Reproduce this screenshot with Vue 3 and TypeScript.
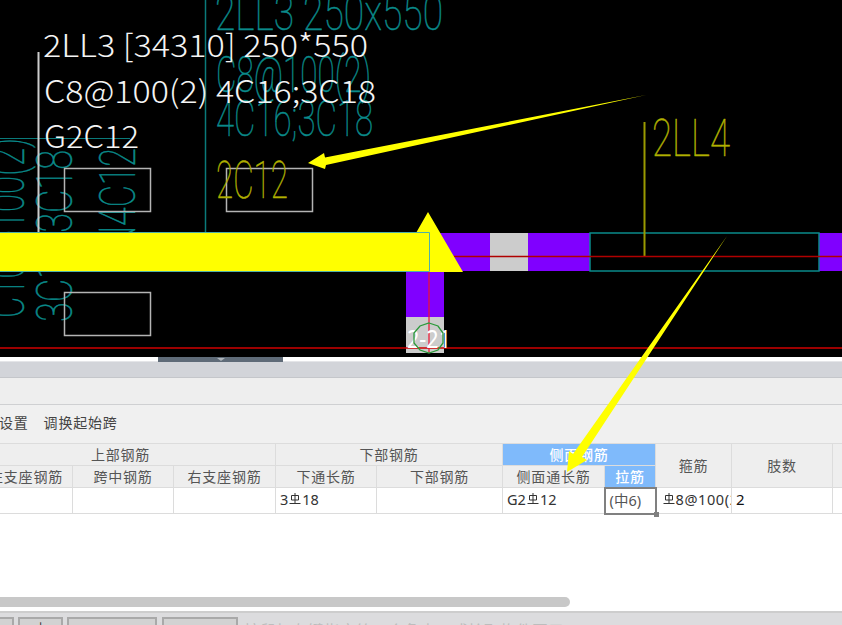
<script setup lang="ts">
// 梁平法表格 header rows, widths taken from the screenshot
const colWidths: number[] = [107, 101, 102, 101, 126, 102, 51, 76, 101, 60]

const cadLabels = [
  { text: '2LL3 [34310] 250*550', x: 43, y: 57, len: 325 },
  { text: 'C8@100(2) 4C16;3C18', x: 44, y: 103, len: 332 },
  { text: 'G2C12', x: 44, y: 148, len: 95 },
]

const boxes = [
  { x: 64.5, y: 168.5, w: 86, h: 43 },
  { x: 226.5, y: 168.5, w: 86, h: 43 },
  { x: 64.5, y: 292.5, w: 86, h: 43 },
]

const statusButtons = [
  { label: '', width: 30 },
  { label: '+', width: 45 },
  { label: '', width: 90 },
  { label: '', width: 76 },
]
</script>

<template>
  <div class="page">
    <svg class="cad" width="842" height="357" viewBox="0 0 842 357">
      <!-- 背景层 teal labels -->
      <g class="teal-text">
        <text x="215" y="30" textLength="228" lengthAdjust="spacingAndGlyphs" font-size="50">2LL3 250x550</text>
        <text x="216" y="92" textLength="155" lengthAdjust="spacingAndGlyphs" font-size="50">C8@100(2)</text>
        <text x="216" y="136" textLength="157" lengthAdjust="spacingAndGlyphs" font-size="50">4C16;3C18</text>
        <text transform="translate(24 318) rotate(-90)" textLength="180" lengthAdjust="spacingAndGlyphs" font-size="50">C10@100(2)</text>
        <text transform="translate(72 322) rotate(-90)" textLength="172" lengthAdjust="spacingAndGlyphs" font-size="50">3C18;3C18</text>
        <text transform="translate(135 250) rotate(-90)" textLength="102" lengthAdjust="spacingAndGlyphs" font-size="50">N4C12</text>
      </g>
      <line x1="205.5" y1="0" x2="205.5" y2="232" stroke="#0a7a7a" stroke-width="1.5" />
      <line x1="0" y1="138.5" x2="130" y2="138.5" stroke="#0a7a7a" />

      <line x1="38.5" y1="52" x2="38.5" y2="232" stroke="#ccc" stroke-width="2" />
      <rect
        v-for="(b, i) in boxes"
        :key="i"
        :x="b.x"
        :y="b.y"
        :width="b.w"
        :height="b.h"
        fill="none"
        stroke="#b4b4b4"
        stroke-width="1.5"
      />

      <!-- 梁 -->
      <rect x="429" y="233" width="61" height="38" fill="#8000ff" />
      <rect x="490" y="233" width="38" height="38" fill="#ccc" />
      <rect x="528" y="233" width="62" height="38" fill="#8000ff" />
      <rect x="819" y="233" width="23" height="38" fill="#8000ff" />
      <rect x="590" y="233" width="229" height="38" fill="#000" stroke="#0a8a8a" stroke-width="1.5" />
      <rect x="406" y="272" width="38" height="45" fill="#8000ff" />
      <rect x="406" y="317" width="38" height="36" fill="#ccc" />

      <line x1="644.5" y1="122" x2="644.5" y2="256" stroke="#9a9a00" stroke-width="2" />
      <g class="olive-text">
        <text x="652" y="156" textLength="78" lengthAdjust="spacingAndGlyphs" font-size="52">2LL4</text>
        <text x="216" y="198" textLength="72" lengthAdjust="spacingAndGlyphs" font-size="52">2C12</text>
      </g>

      <line x1="429" y1="256.5" x2="842" y2="256.5" stroke="#b00000" stroke-width="1.5" />
      <line x1="0" y1="348" x2="842" y2="348" stroke="#d00000" stroke-width="1.5" />
      <line x1="429" y1="272" x2="429" y2="353" stroke="#f01030" stroke-width="1.2" />

      <text class="column-name" x="407" y="348" textLength="44" lengthAdjust="spacingAndGlyphs">2-21</text>
      <polygon
        points="429,323 438,326 443,333 443,343 438,350 429,353 420,350 414,343 414,333 420,326"
        fill="none"
        stroke="#2a9a3a"
        stroke-width="1.3"
      />

      <!-- 大箭头 -->
      <polygon points="0,233 416,233 428,212 463,272 0,272" fill="#ffff00" />
      <path d="M0 232.5H429.5V271.5H0" fill="none" stroke="#4fb0a8" stroke-width="1" />

      <text
        v-for="label in cadLabels"
        :key="label.text"
        class="white-text"
        :x="label.x"
        :y="label.y"
        :textLength="label.len"
        lengthAdjust="spacingAndGlyphs"
      >{{ label.text }}</text>
    </svg>

    <div class="strip">
      <div class="handle"><span class="handle-arrow"></span></div>
    </div>
    <div class="title-bar"></div>
    <div class="tab-area"></div>

    <div class="toolbar">
      <span>设置</span>
      <span>调换起始跨</span>
    </div>

    <div class="grid-area">
      <table class="grid">
        <colgroup>
          <col v-for="(w, i) in colWidths" :key="i" :style="{ width: w + 'px' }" />
        </colgroup>
        <tbody>
          <tr class="head">
            <th colspan="3">上部钢筋</th>
            <th colspan="2">下部钢筋</th>
            <th colspan="2" class="active">侧面钢筋</th>
            <th rowspan="2">箍筋</th>
            <th rowspan="2">肢数</th>
            <th rowspan="2"></th>
          </tr>
          <tr class="head">
            <th class="first-sub">左支座钢筋</th>
            <th>跨中钢筋</th>
            <th>右支座钢筋</th>
            <th>下通长筋</th>
            <th>下部钢筋</th>
            <th>侧面通长筋</th>
            <th class="active">拉筋</th>
          </tr>
          <tr class="data">
            <td></td>
            <td></td>
            <td></td>
            <td>
              3<svg class="rebar" viewBox="0 0 12 12"><path d="M2.5 2.5h7v4.5h-7zM6 0v10M.5 10.5h11" /></svg>18
            </td>
            <td></td>
            <td class="side">
              G2<svg class="rebar" viewBox="0 0 12 12"><path d="M2.5 2.5h7v4.5h-7zM6 0v10M.5 10.5h11" /></svg>12
            </td>
            <td class="focus">(中6)<span class="corner"></span></td>
            <td class="stirrup">
              <svg class="rebar" viewBox="0 0 12 12"><path d="M2.5 2.5h7v4.5h-7zM6 0v10M.5 10.5h11" /></svg>8@100(2)
            </td>
            <td class="count">2</td>
            <td></td>
          </tr>
        </tbody>
      </table>
    </div>

    <div class="scroll-track"><div class="scroll-thumb"></div></div>

    <div class="status-bar">
      <div
        v-for="(b, i) in statusButtons"
        :key="i"
        class="status-btn"
        :style="{ width: b.width + 'px' }"
      >{{ b.label }}</div>
      <span class="status-text">按鼠标左键指定第一个角点，或拾取构件图元</span>
    </div>

    <!-- 批注箭头，压在界面上面 -->
    <svg class="marks" width="842" height="625" viewBox="0 0 842 625">
      <polygon points="646,95 325,157.5 324,153 308,163 325,169 326,165" fill="#ffff00" />
      <polygon points="727,236 582,457 587,460 567,472 569,451 573,454" fill="#ffff00" />
    </svg>
  </div>
</template>

<style>
html,
body {
  margin: 0;
  background: #fff;
}
</style>

<style scoped>
.page {
  position: relative;
  width: 842px;
  height: 625px;
  overflow: hidden;
  display: flex;
  flex-direction: column;
  background: #fff;
  font-family: "Noto Sans CJK SC", "Noto Sans", sans-serif;
}

.cad {
  display: block;
  flex: none;
  background: #000;
}

.teal-text text {
  fill: #0a8a8a;
  stroke: #0a8a8a;
  stroke-width: 0.5;
  font-family: Roboto, sans-serif;
  font-weight: 100;
}

.olive-text text {
  fill: #b0b000;
  stroke: #b0b000;
  stroke-width: 0.5;
  font-family: Roboto, sans-serif;
  font-weight: 100;
}

.white-text {
  fill: #f4f4f4;
  font-family: "Noto Sans CJK SC", "Noto Sans", sans-serif;
  font-weight: 300;
  font-size: 31px;
}

.column-name {
  fill: #fff;
  font-family: "Noto Sans", sans-serif;
  font-size: 25px;
  font-weight: 400;
}

.strip {
  flex: none;
  height: 5px;
  display: flex;
  padding-left: 158px;
  border-bottom: 1px solid #e4e5e8;
  box-sizing: border-box;
}

.handle {
  flex: none;
  width: 125px;
  height: 5px;
  background: #5f6b78;
  display: flex;
  justify-content: center;
}

.handle-arrow {
  width: 0;
  height: 0;
  margin-top: 1px;
  border-left: 4px solid transparent;
  border-right: 4px solid transparent;
  border-top: 3px solid #aeb4bb;
}

.title-bar {
  flex: none;
  height: 15px;
  background: #d2d4d9;
  border-bottom: 1px solid #c4c6ca;
}

.tab-area {
  flex: none;
  height: 26px;
  background: #eeeeee;
  border-bottom: 1px solid #cfd0d2;
}

.toolbar {
  flex: none;
  height: 38px;
  padding-bottom: 4px;
  box-sizing: border-box;
  display: flex;
  align-items: center;
  gap: 15px;
  margin-left: -1px;
  background: #f0f0f0;
  font-size: 14px;
  color: #444;
}

.toolbar span {
  letter-spacing: 0.8px;
}

.grid-area {
  flex: none;
  height: 154px;
  overflow: hidden;
}

.grid {
  table-layout: fixed;
  border-collapse: collapse;
  width: 927px;
  margin-left: -35px;
  font-size: 14px;
  color: #444;
}

.grid th,
.grid td {
  border: 1.5px solid #dcdcdc;
  padding: 0;
  box-sizing: border-box;
}

.head th {
  height: 22px;
  padding-bottom: 1px;
  background: #eeeeee;
  font-weight: 400;
  text-align: center;
  color: #555;
  letter-spacing: 0.8px;
  line-height: 18px;
}

.head th.active {
  background: #7fbafb;
  color: #fff;
  font-weight: 500;
}

.head th.first-sub {
  padding-left: 14px;
}

.data td {
  height: 25px;
  padding: 0 0 3px 4px;
  background: #fff;
  white-space: nowrap;
  overflow: hidden;
  font-family: "Noto Sans", "Noto Sans CJK SC", sans-serif;
  font-size: 14.5px;
  color: #333;
}

.data td.focus {
  position: relative;
  overflow: visible;
  border: 2px solid #808080;
  color: #555;
}

.corner {
  position: absolute;
  right: -4px;
  bottom: -4px;
  width: 5px;
  height: 5px;
  background: #808080;
}

.data td.stirrup {
  padding-left: 5px;
  letter-spacing: 0.6px;
}

.data td.count {
  font-size: 15px;
  color: #111;
}

.rebar {
  width: 12px;
  height: 12px;
  margin: 0 1px 4px;
  vertical-align: middle;
  fill: none;
  stroke: #333;
  stroke-width: 1;
}

.scroll-track {
  flex: none;
  height: 14px;
  background: #fff;
}

.scroll-thumb {
  width: 570px;
  height: 10px;
  background: #c8c8c8;
  border-radius: 0 5px 5px 0;
}

.status-bar {
  flex: 1;
  display: flex;
  align-items: flex-start;
  gap: 4px;
  margin-left: -16px;
  padding-top: 4px;
  background: #dcdcde;
  border-top: 2px solid #cdcdcd;
  box-sizing: border-box;
  min-height: 0;
  overflow: hidden;
}

.status-btn {
  flex: none;
  height: 30px;
  box-sizing: border-box;
  border: 2px solid #a9a9a9;
  background: #d2d2d2;
  font-size: 13px;
  text-align: center;
  line-height: 12px;
  color: #333;
}

.status-btn:nth-child(3) {
  margin-right: 1px;
}

.status-text {
  margin-left: 2px;
  margin-top: 3px;
  font-size: 16px;
  white-space: nowrap;
  color: #bdbdbd;
  line-height: 20px;
}

.marks {
  position: absolute;
  left: 0;
  top: 0;
  pointer-events: none;
}
</style>
